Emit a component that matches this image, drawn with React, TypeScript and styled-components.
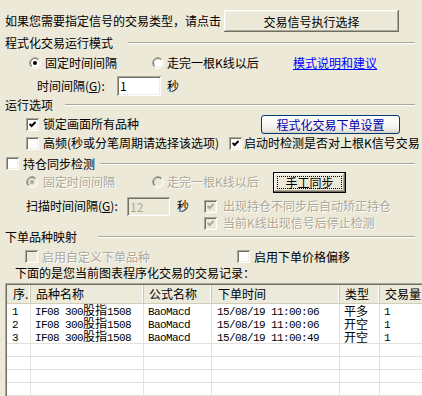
import React, { useId } from "react";
import styled, { createGlobalStyle, css } from "styled-components";

const GlobalStyle = createGlobalStyle`
  html, body {
    margin: 0;
    padding: 0;
    background: #ece9d8;
    overflow: hidden;
  }
  body {
    font-family: "Noto Sans CJK SC", "Noto Sans", sans-serif;
    font-size: 12px;
    color: #000;
  }
`;

const sunken = css`
  box-shadow: inset 1px 1px #aca899, inset -1px -1px #fff, inset 2px 2px #716f64,
    inset -2px -2px #f1efe2;
`;

const Dialog = styled.div`
  width: 422px;
  height: 396px;
  overflow: hidden;
  display: flex;
  flex-direction: column;
  background: #ece9d8;
`;

const Row = styled.div<{ $h: number; $mt?: number; $pl?: number }>`
  display: flex;
  align-items: center;
  flex-shrink: 0;
  height: ${(p) => p.$h}px;
  margin-top: ${(p) => p.$mt ?? 0}px;
  padding-left: ${(p) => p.$pl ?? 0}px;
`;

const Slot = styled.div<{ $w: number; $pl?: number }>`
  width: ${(p) => p.$w}px;
  flex-shrink: 0;
  display: flex;
  align-items: center;
  padding-left: ${(p) => p.$pl ?? 0}px;
  box-sizing: border-box;
`;

const Label = styled.span<{ $off?: boolean }>`
  white-space: nowrap;
  line-height: 14px;
  ${(p) =>
    p.$off &&
    css`
      color: #aca899;
      text-shadow: 1px 1px 0 #fff;
    `}
`;

const GroupTitle = styled(Label)<{ $w: number }>`
  width: ${(p) => p.$w}px;
  flex-shrink: 0;
`;

const EtchedLine = styled.div`
  flex: 1;
  height: 0;
  border-top: 1px solid #aca899;
  border-bottom: 1px solid #fff;
  margin-right: 7px;
`;

const ClassicButton = styled.button<{ $w: number; $h: number; $default?: boolean }>`
  width: ${(p) => p.$w}px;
  height: ${(p) => p.$h}px;
  flex-shrink: 0;
  margin: 0;
  padding: 0;
  box-sizing: border-box;
  font: inherit;
  color: #000;
  background: #ece9d8;
  border: none;
  box-shadow: inset -1px -1px #716f64, inset 1px 1px #fff, inset -2px -2px #aca899,
    inset 2px 2px #f1efe2;
  ${(p) =>
    p.$default &&
    css`
      border: 1px solid #000;
      outline: 1px dotted #000;
      outline-offset: -5px;
    `}
`;

const ThemedButton = styled.button<{ $w: number; $h: number }>`
  width: ${(p) => p.$w}px;
  height: ${(p) => p.$h}px;
  flex-shrink: 0;
  margin: 0;
  padding: 0;
  box-sizing: border-box;
  font: inherit;
  color: #0000a8;
  border: 1px solid #003c74;
  border-radius: 3px;
  background: linear-gradient(180deg, #ffffff 0%, #f7f6f1 55%, #e9e7de 85%, #d6d0c5 100%);
`;

const Edit = styled.input<{ $w: number; $h: number }>`
  width: ${(p) => p.$w}px;
  height: ${(p) => p.$h}px;
  flex-shrink: 0;
  box-sizing: border-box;
  margin: 0;
  padding: 0 0 0 3px;
  font: inherit;
  color: #000;
  background: #fff;
  border: none;
  outline: none;
  ${sunken}
  &:disabled {
    background: #ece9d8;
    color: #aca899;
  }
`;

const LinkText = styled.span`
  color: #0000ff;
  text-decoration: underline;
  white-space: nowrap;
  line-height: 14px;
`;

const Option = styled.div<{ $gap: number }>`
  display: flex;
  align-items: center;
  gap: ${(p) => p.$gap}px;
  flex-shrink: 0;
`;

const Box = styled.span<{ $off?: boolean }>`
  width: 13px;
  height: 13px;
  flex-shrink: 0;
  display: inline-flex;
  align-items: center;
  justify-content: center;
  background: ${(p) => (p.$off ? "#ece9d8" : "#fff")};
  ${sunken}
`;

const Unit = styled(Label)<{ $ml: number }>`
  margin-left: ${(p) => p.$ml}px;
`;

const CheckMark = ({ off }: { off?: boolean }) => (
  <svg width="7" height="7" viewBox="0 0 7 7">
    <polyline
      points="0.6,3 2.6,5 6.6,1"
      fill="none"
      stroke={off ? "#aca899" : "#000"}
      strokeWidth="2"
    />
  </svg>
);

const CheckBox = ({
  checked,
  off,
  gap = 4,
  children,
}: {
  checked?: boolean;
  off?: boolean;
  gap?: number;
  children: React.ReactNode;
}) => (
  <Option $gap={gap}>
    <Box $off={off}>{checked && <CheckMark off={off} />}</Box>
    <Label $off={off}>{children}</Label>
  </Option>
);

const RadioMark = ({ checked, off }: { checked?: boolean; off?: boolean }) => {
  const id = useId().replace(/:/g, "");
  return (
    <svg width="12" height="12" viewBox="0 0 12 12" style={{ flexShrink: 0 }}>
      <defs>
        <linearGradient id={`o${id}`} x1="0" y1="0" x2="1" y2="1">
          <stop offset="0.5" stopColor="#aca899" />
          <stop offset="0.5" stopColor="#ffffff" />
        </linearGradient>
        <linearGradient id={`i${id}`} x1="0" y1="0" x2="1" y2="1">
          <stop offset="0.5" stopColor="#716f64" />
          <stop offset="0.5" stopColor="#f1efe2" />
        </linearGradient>
      </defs>
      <circle cx="6" cy="6" r="5.5" fill="none" stroke={`url(#o${id})`} />
      <circle
        cx="6"
        cy="6"
        r="4.5"
        fill={off ? "#ece9d8" : "#fff"}
        stroke={`url(#i${id})`}
      />
      {checked && <circle cx="6" cy="6" r="2" fill={off ? "#aca899" : "#000"} />}
    </svg>
  );
};

const Radio = ({
  checked,
  off,
  gap = 4,
  children,
}: {
  checked?: boolean;
  off?: boolean;
  gap?: number;
  children: React.ReactNode;
}) => (
  <Option $gap={gap}>
    <RadioMark checked={checked} off={off} />
    <Label $off={off}>{children}</Label>
  </Option>
);

/* list view */
const COLS = [24, 113, 68, 128, 40, 60];
const PADS = [5, 4, 4, 5, 4, 4];
const gridCols = COLS.map((c) => `${c}px`).join(" ");

const ListOuter = styled.div`
  margin-left: 5px;
  margin-top: 3px;
  width: 440px;
  flex: 1;
  border-top: 1px solid #aca899;
  border-left: 1px solid #aca899;
  display: flex;
`;

const ListInner = styled.div`
  flex: 1;
  border-top: 1px solid #716f64;
  border-left: 1px solid #716f64;
  background: #fff;
  overflow: hidden;
`;

const HeaderRow = styled.div`
  display: grid;
  grid-template-columns: ${gridCols};
  height: 19px;
  box-sizing: border-box;
  background: #ebeadb;
  border-bottom: 1px solid #d0cdb8;
`;

const HeaderCell = styled.div<{ $pl: number }>`
  display: flex;
  align-items: center;
  padding-left: ${(p) => p.$pl}px;
  border-right: 1px solid #c7c5b2;
  box-shadow: inset -1px 0 #fff;
  white-space: nowrap;
  line-height: 14px;
`;

const DataRow = styled.div<{ $empty?: boolean }>`
  display: grid;
  grid-template-columns: ${gridCols};
  height: 13px;
  box-sizing: border-box;
  ${(p) => p.$empty && "border-top: 1px solid #e3e2da;"}
`;

const DataCell = styled.div<{ $pl: number }>`
  display: flex;
  align-items: center;
  padding-left: ${(p) => p.$pl}px;
  border-right: 1px solid #e3e2da;
  line-height: 12px;
  white-space: nowrap;
`;

const Latin = styled.span`
  font-family: "Liberation Mono", "DejaVu Sans Mono", monospace;
  font-size: 11px;
  letter-spacing: -0.6px;
  line-height: 12px;
`;

const Han = styled.span`
  line-height: 12px;
`;

const Mixed = ({ text }: { text: string }) => (
  <span>
    {text
      .split(/([\x20-\x7e]+)/)
      .filter(Boolean)
      .map((s, i) =>
        /^[\x20-\x7e]+$/.test(s) ? <Latin key={i}>{s}</Latin> : <Han key={i}>{s}</Han>
      )}
  </span>
);

const headers = ["序.", "品种名称", "公式名称", "下单时间", "类型", "交易量"];
const records = [
  ["1", "IF08 300股指1508", "BaoMacd", "15/08/19 11:00:06", "平多", "1"],
  ["2", "IF08 300股指1508", "BaoMacd", "15/08/19 11:00:06", "开空", "1"],
  ["3", "IF08 300股指1508", "BaoMacd", "15/08/19 11:00:49", "开空", "1"],
];

const TradeList = () => (
  <ListOuter>
    <ListInner>
      <HeaderRow>
        {headers.map((h, i) => (
          <HeaderCell key={h} $pl={PADS[i] + 1}>
            {h}
          </HeaderCell>
        ))}
      </HeaderRow>
      {records.map((r) => (
        <DataRow key={r[0]}>
          {r.map((c, i) => (
            <DataCell key={i} $pl={PADS[i]}>
              <Mixed text={c} />
            </DataCell>
          ))}
        </DataRow>
      ))}
      {[0, 1, 2, 3, 4, 5].map((k) => (
        <DataRow key={`e${k}`} $empty>
          {COLS.map((_, i) => (
            <DataCell key={i} $pl={0} />
          ))}
        </DataRow>
      ))}
    </ListInner>
  </ListOuter>
);

export default function App() {
  return (
    <>
      <GlobalStyle />
      <Dialog>
        <Row $h={22} $mt={10} $pl={5}>
          <Slot $w={219}>
            <Label>如果您需要指定信号的交易类型，请点击</Label>
          </Slot>
          <ClassicButton $w={175} $h={22}>
            交易信号执行选择
          </ClassicButton>
        </Row>

        <Row $h={16} $mt={3} $pl={5}>
          <GroupTitle $w={123}>程式化交易运行模式</GroupTitle>
          <EtchedLine />
        </Row>

        <Row $h={16} $mt={4} $pl={29}>
          <Slot $w={123}>
            <Radio checked>固定时间间隔</Radio>
          </Slot>
          <Slot $w={141}>
            <Radio gap={3}>走完一根K线以后</Radio>
          </Slot>
          <LinkText>模式说明和建议</LinkText>
        </Row>

        <Row $h={21} $mt={4} $pl={37}>
          <Slot $w={80}>
            <Label>
              时间间隔(<u>G</u>):
            </Label>
          </Slot>
          <Edit $w={44} $h={20} defaultValue="1" />
          <Unit $ml={6}>秒</Unit>
        </Row>

        <Row $h={16} $mt={1} $pl={5}>
          <GroupTitle $w={60}>运行选项</GroupTitle>
          <EtchedLine />
        </Row>

        <Row $h={20} $mt={1} $pl={26}>
          <Slot $w={235}>
            <CheckBox checked>锁定画面所有品种</CheckBox>
          </Slot>
          <ThemedButton $w={139} $h={19}>
            程式化交易下单设置
          </ThemedButton>
        </Row>

        <Row $h={16} $mt={1} $pl={26}>
          <Slot $w={203}>
            <CheckBox>高频(秒或分笔周期请选择该选项)</CheckBox>
          </Slot>
          <CheckBox checked gap={2}>
            启动时检测是否对上根K信号交易
          </CheckBox>
        </Row>

        <Row $h={15} $mt={5} $pl={6}>
          <Slot $w={94}>
            <CheckBox>持仓同步检测</CheckBox>
          </Slot>
          <EtchedLine />
        </Row>

        <Row $h={22} $pl={26}>
          <Slot $w={126}>
            <Radio checked off gap={5}>
              固定时间间隔
            </Radio>
          </Slot>
          <Slot $w={121}>
            <Radio off gap={3}>
              走完一根K线以后
            </Radio>
          </Slot>
          <ClassicButton $w={73} $h={21} $default>
            手工同步
          </ClassicButton>
        </Row>

        <Row $h={20} $mt={3} $pl={26}>
          <Slot $w={101}>
            <Label>
              扫描时间间隔(<u>G</u>):
            </Label>
          </Slot>
          <Edit $w={43} $h={19} defaultValue="12" disabled />
          <Slot $w={34} $pl={7}>
            <Label>秒</Label>
          </Slot>
          <CheckBox checked off gap={6}>
            出现持仓不同步后自动矫正持仓
          </CheckBox>
        </Row>

        <Row $h={14} $pl={204}>
          <CheckBox checked off gap={6}>
            当前K线出现信号后停止检测
          </CheckBox>
        </Row>

        <Row $h={14} $pl={5}>
          <GroupTitle $w={93}>下单品种映射</GroupTitle>
          <EtchedLine />
        </Row>

        <Row $h={17} $mt={4} $pl={25}>
          <Slot $w={212}>
            <CheckBox off>启用自定义下单品种</CheckBox>
          </Slot>
          <CheckBox>启用下单价格偏移</CheckBox>
        </Row>

        <Row $h={15} $pl={15}>
          <Label>下面的是您当前图表程序化交易的交易记录：</Label>
        </Row>

        <TradeList />
      </Dialog>
    </>
  );
}
